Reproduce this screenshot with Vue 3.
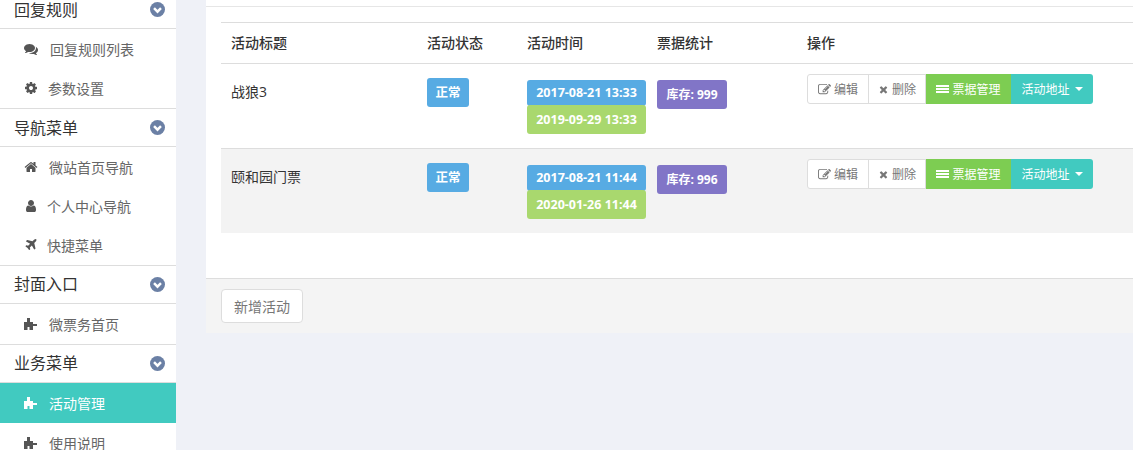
<script setup>
const icons = {
  comments: 'M1408 768q0 139-94 257t-256.500 186.500-353.500 68.500q-86 0-176-16-124 88-278 128-36 9-86 16h-3q-11 0-20.500-8t-11.500-21q-1-3-1-6.500t.5-6.500 2-6l2.500-5 3.500-5.500 4-5 4.500-5 4-4.500q5-6 23-25t26-29.500 22.500-29 25-38.500 20.500-44q-124-72-195-177t-71-224q0-139 94-257t256.500-186.500 353.500-68.500 353.500 68.500 256.500 186.500 94 257zm384 256q0 120-71 224.500t-195 176.500q10 24 20.500 44t25 38.500 22.500 29 26 29.500 23 25q1 1 4 4.500t4.500 5 4 5 3.500 5.500l2.500 5 2 6 .5 6.500-1 6.500q-3 14-13 22t-22 7q-50-7-86-16-154-40-278-128-90 16-176 16-271 0-472-132 58 4 88 4 161 0 309-45t264-129q125-92 192-212t67-254q0-77-23-152 129 71 204 178t75 230z',
  cog: 'M1152 896q0-106-75-181t-181-75-181 75-75 181 75 181 181 75 181-75 75-181zm512-109v222q0 12-8 23t-20 13l-185 28q-19 54-39 91 35 50 107 138 10 12 10 25t-9 23q-27 37-99 108t-94 71q-12 0-26-9l-138-108q-44 23-91 38-16 136-29 186-7 28-36 28h-222q-14 0-24.500-8.500t-11.500-21.500l-28-184q-49-16-90-37l-141 107q-10 9-25 9-14 0-25-11-126-114-165-168-7-10-7-23 0-12 8-23 15-21 51-66.500t54-70.500q-27-50-41-99l-183-27q-13-2-21-12.500t-8-23.500v-222q0-12 8-23t19-13l186-28q14-46 39-92-40-57-107-138-10-12-10-24 0-10 9-23 26-36 98.500-107.500t94.500-71.500q13 0 26 10l138 107q44-23 91-38 16-136 29-186 7-28 36-28h222q14 0 24.500 8.500t11.500 21.500l28 184q49 16 90 37l142-107q9-9 24-9 13 0 25 10 129 119 165 170 7 8 7 22 0 12-8 23-15 21-51 66.500t-54 70.500q26 50 41 98l183 28q13 2 21 12.500t8 23.500z',
  home: 'M1472 992v480q0 26-19 45t-45 19h-384v-384h-256v384h-384q-26 0-45-19t-19-45v-480q0-1 .5-3t.5-3l575-474 575 474q1 2 1 6zm223-69l-62 74q-8 9-21 11h-3q-13 0-21-7l-692-577-692 577q-12 8-24 7-13-2-21-11l-62-74q-8-10-7-23.500t11-21.500l719-599q32-26 76-26t76 26l244 204v-195q0-14 9-23t23-9h192q14 0 23 9t9 23v408l219 182q10 8 11 21.500t-7 23.500z',
  user: 'M1536 1399q0 109-62.500 187t-150.500 78h-854q-88 0-150.500-78t-62.500-187q0-85 8.500-160.500t31.500-152 58.500-131 94-89 134.500-34.500q131 128 313 128t313-128q76 0 134.500 34.500t94 89 58.500 131 31.500 152 8.500 160.500zm-256-887q0 159-112.500 271.500t-271.500 112.500-271.500-112.500-112.500-271.500 112.500-271.500 271.500-112.500 271.500 112.500 112.500 271.500z',
  plane: 'M1568 160q44 52 12 148t-108 172l-161 161 160 696q5 19-12 33l-128 96q-7 6-19 6-4 0-7-1-15-3-21-16l-279-508-259 259 53 194q5 17-8 31l-96 96q-9 9-23 9h-2q-15-2-24-13l-189-252-252-189q-11-7-13-23-1-13 9-25l96-97q9-9 23-9 6 0 8 1l194 53 259-259-508-279q-14-8-17-24-2-16 9-27l128-128q14-13 30-8l665 159 160-160q76-76 172-108t148 12z',
  puzzle: 'M0 640H384V128H768V640H1152V896H1664V1152H1152V1664H704V1280H448V1664H0Z',
  edit: 'M888 1184l116-116-152-152-116 116v56h96v96h56zm440-720q-16-16-33 1l-350 350q-17 17-1 33t33-1l350-350q17-17 1-33zm80 594v190q0 119-84.500 203.500t-203.500 84.500h-832q-119 0-203.500-84.500t-84.500-203.500v-832q0-119 84.500-203.500t203.500-84.500h832q63 0 117 25 15 7 18 23 3 17-9 29l-49 49q-14 14-32 8-23-6-45-6h-832q-66 0-113 47t-47 113v832q0 66 47 113t113 47h832q66 0 113-47t47-113v-126q0-13 9-22l64-64q15-15 35-7t20 29zm-96-738l288 288-672 672h-288v-288zm444 132l-92 92-288-288 92-92q28-28 68-28t68 28l152 152q28 28 28 68t-28 68z',
  times: 'M1490 1322q0 40-28 68l-136 136q-28 28-68 28t-68-28l-294-294-294 294q-28 28-68 28t-68-28l-136-136q-28-28-28-68t28-68l294-294-294-294q-28-28-28-68t28-68l136-136q28-28 68-28t68 28l294 294 294-294q28-28 68-28t68 28l136 136q28 28 28 68t-28 68l-294 294 294 294q28 28 28 68z',
  bars: 'M0 276H1792V551H0ZM0 689H1792V965H0ZM0 1103H1792V1378H0Z'
}

const groups = [
  { title: '回复规则', cls: 'tight-a', items: [
    { icon: 'comments', text: '回复规则列表', gap: 'gap-l' },
    { icon: 'cog', text: '参数设置', gap: 'gap-m' }
  ] },
  { title: '导航菜单', cls: 'tight-b', items: [
    { icon: 'home', text: '微站首页导航', gap: 'gap-n' },
    { icon: 'user', text: '个人中心导航', gap: 'gap-s' },
    { icon: 'plane', text: '快捷菜单', gap: 'gap-s' }
  ] },
  { title: '封面入口', cls: '', items: [
    { icon: 'puzzle', text: '微票务首页', gap: 'gap-n' }
  ] },
  { title: '业务菜单', cls: '', items: [
    { icon: 'puzzle', text: '活动管理', gap: 'gap-n', active: true },
    { icon: 'puzzle', text: '使用说明', gap: 'gap-n' }
  ] }
]

const rows = [
  { title: '战狼3', start: '2017-08-21 13:33', end: '2019-09-29 13:33', stock: '库存: 999' },
  { title: '颐和园门票', start: '2017-08-21 11:44', end: '2020-01-26 11:44', stock: '库存: 996' }
]
</script>

<template>
  <div class="page">
    <aside class="sidebar">
      <section v-for="g in groups" :key="g.title" class="group" :class="g.cls">
        <h3 class="group-title">
          <span class="group-name">{{ g.title }}</span>
          <svg class="chev" viewBox="0 0 16 16" width="15" height="15">
            <circle cx="8" cy="8" r="8" fill="#6b80a5" />
            <path d="M4.300 6.600 8 10.300 11.700 6.600" fill="none" stroke="#fff" stroke-width="2.600" />
          </svg>
        </h3>
        <ul class="list">
          <li v-for="it in g.items" :key="it.text" class="item" :class="[it.gap, { active: it.active }]">
            <svg class="ico" viewBox="0 0 1792 1792" width="14" height="14"><path :d="icons[it.icon]" /></svg>
            <span>{{ it.text }}</span>
          </li>
        </ul>
      </section>
    </aside>

    <main class="main">
      <div class="panel">
        <div class="panel-body">
          <table class="table">
            <thead>
              <tr>
                <th class="c1">活动标题</th>
                <th class="c2">活动状态</th>
                <th class="c3">活动时间</th>
                <th class="c4">票据统计</th>
                <th>操作</th>
              </tr>
            </thead>
            <tbody>
              <tr v-for="(r, i) in rows" :key="r.title" :class="i === 1 ? 'odd' : 'even'">
                <td class="name">{{ r.title }}</td>
                <td><span class="tag blue status">正常</span></td>
                <td class="dates">
                  <span class="tag blue date">{{ r.start }}</span>
                  <span class="tag green date second">{{ r.end }}</span>
                </td>
                <td><span class="tag purple stock">{{ r.stock }}</span></td>
                <td class="ops">
                  <div class="btns">
                    <span class="btn plain"><svg viewBox="0 0 1792 1792" width="13" height="13"><path :d="icons.edit" /></svg>编辑</span>
                    <span class="btn plain del"><svg viewBox="0 0 1792 1792" width="11" height="11"><path :d="icons.times" /></svg>删除</span>
                    <span class="btn lime"><svg viewBox="0 0 1792 1792" width="13" height="13"><path :d="icons.bars" /></svg>票据管理</span>
                    <span class="btn teal">活动地址<i class="caret"></i></span>
                  </div>
                </td>
              </tr>
            </tbody>
          </table>
        </div>
        <div class="panel-foot">
          <span class="add">新增活动</span>
        </div>
      </div>
    </main>
  </div>
</template>

<style>
html, body { margin: 0; overflow: hidden; background: #eff1f7; }
</style>

<style scoped>
* { box-sizing: border-box; }
.page {
  display: flex;
  height: 450px;
  overflow: hidden;
  background: #eff1f7;
  font-family: "Open Sans", "Noto Sans CJK SC", sans-serif;
  color: #333;
}
.sidebar {
  width: 176px;
  flex: none;
  height: 459px;
  margin-top: -9px;
  background: #fff;
}
.group-title {
  display: flex;
  align-items: center;
  justify-content: space-between;
  height: 38px;
  margin: 0;
  padding: 0 11px 0 14px;
  border-bottom: 1px solid #ddd;
  font-size: 16px;
  font-weight: 400;
  color: #333;
}
.group-name { padding-bottom: 2px; }
.list {
  list-style: none;
  margin: 0;
  padding: 0;
  border-bottom: 1px solid #ddd;
}
.item {
  display: flex;
  align-items: center;
  height: 40px;
  padding-left: 24px;
  font-size: 14px;
  color: #666;
}
.tight-a .item { height: 39.5px; }
.tight-b .item { height: 39.33px; }
.ico { fill: #555; flex: none; }
.gap-l .ico { margin-right: 12px; }
.gap-m .ico { margin-right: 10px; }
.gap-n .ico { margin-right: 11px; }
.gap-s .ico { margin-right: 9px; }
.item.active { background: #41cac0; color: #fff; }
.item.active .ico { fill: #fff; }

.main { flex: 1; min-width: 0; padding-left: 30px; }
.panel { background: #fff; }
.panel-body {
  height: 278px;
  padding: 22px 0 0 15px;
  background: linear-gradient(#fff 6px, #e6e6e6 6px, #e6e6e6 7px, #fff 7px);
}
.table {
  width: 912px;
  table-layout: fixed;
  border-collapse: collapse;
  font-size: 13px;
}
.c1 { width: 196px; }
.c2 { width: 100px; }
.c3 { width: 130px; }
.c4 { width: 150px; }
th {
  height: 41px;
  padding: 0 10px 3px;
  text-align: left;
  font-size: 14px;
  font-weight: 500;
  color: #333;
  border-top: 1px solid #ddd;
  border-bottom: 1px solid #ddd;
}
td {
  padding: 14px 0 0 10px;
  vertical-align: top;
  color: #333;
}
.even td { height: 85px; }
.odd td { height: 84px; background: #f3f3f3; border-top: 1px solid #ddd; }
.name { padding-top: 18px; font-size: 14px; line-height: 19px; }
.tag {
  display: inline-block;
  color: #fff;
  font-weight: 700;
  font-size: 12px;
  border-radius: 3px;
  text-align: center;
}
.blue { background: #57abe3; }
.green { background: #a9d86e; }
.purple { background: #8175c7; }
.status { width: 42px; height: 29px; line-height: 29px; font-size: 12.500px; }
.dates { padding-top: 16px; }
.date { display: block; width: 119px; height: 26px; line-height: 26px; font-size: 12.500px; }
.second { height: 29px; line-height: 29px; margin-top: -1px; }
.stock { margin-top: 2px; width: 70px; height: 29px; line-height: 29px; }
.ops { padding-top: 10px; }
.btns { display: flex; height: 30px; }
.btn {
  display: flex;
  align-items: center;
  justify-content: center;
  height: 30px;
  font-size: 12px;
  white-space: nowrap;
  font-weight: 400;
}
.btn svg { margin-right: 3px; fill: currentColor; flex: none; }
.plain {
  width: 62px;
  background: #fff;
  color: #777;
  border: 1px solid #ddd;
  border-radius: 3px 0 0 3px;
}
.del { width: 58px; margin-left: -1px; border-radius: 0; }
.lime { width: 85px; background: #7dcd52; color: #fff; }
.teal { width: 82px; background: #41cac0; color: #fff; border-radius: 0 3px 3px 0; }
.caret {
  width: 0;
  height: 0;
  margin-left: 5px;
  border-top: 4px solid #fff;
  border-left: 4px solid transparent;
  border-right: 4px solid transparent;
}
.panel-foot {
  height: 55px;
  padding: 10px 15px;
  background: #f4f4f4;
  border-top: 1px solid #ddd;
}
.add {
  display: flex;
  align-items: center;
  justify-content: center;
  width: 82px;
  height: 34px;
  background: #fff;
  border: 1px solid #ddd;
  border-radius: 4px;
  font-size: 14px;
  color: #777;
}
</style>
